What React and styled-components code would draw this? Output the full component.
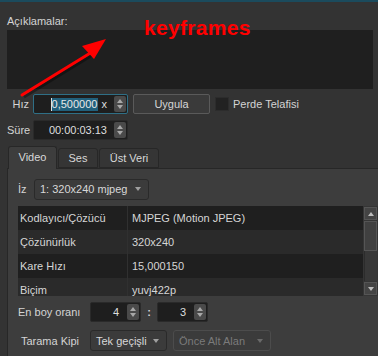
import React from "react";
import styled, { createGlobalStyle } from "styled-components";

const Global = createGlobalStyle`
  html, body { margin: 0; padding: 0; background: #333333; }
  body { font-family: "Liberation Sans", Arial, sans-serif; font-size: 11px; color: #d4d4d4; }
  * { box-sizing: border-box; }
`;

const Page = styled.div`
  position: relative;
  width: 378px;
  height: 356px;
  overflow: hidden;
  background: #333333;
`;

const TopStrip = styled.div`
  height: 2px;
  background: #1b4b5d;
`;

const Body = styled.div`
  padding-left: 7px;
`;

const Caption = styled.div`
  margin-top: 12px;
  height: 16px;
  line-height: 14px;
`;

const NotesBox = styled.div`
  height: 59px;
  margin-right: 5px;
  background: #1f1f1f;
`;

const Row = styled.div`
  display: flex;
  align-items: center;
  height: 20px;
  margin-top: ${(p) => p.$mt}px;
`;

const RowLabel = styled.div`
  width: ${(p) => p.$w}px;
  text-align: right;
  margin-right: ${(p) => p.$gap}px;
  white-space: nowrap;
`;

const Spin = styled.div`
  display: flex;
  width: ${(p) => p.$w}px;
  height: ${(p) => p.$h || 20}px;
  border: 1px solid ${(p) => (p.$focus ? "#2f6f86" : "#2a2a2a")};
  border-radius: 2px;
  background: #1e1e1e;
  overflow: hidden;
`;

const SpinText = styled.div`
  flex: 1;
  display: flex;
  align-items: center;
  justify-content: flex-end;
  padding-right: ${(p) => p.$pr || 7}px;
  white-space: nowrap;
  color: #dedede;
`;

const Sel = styled.span`
  background: #21607c;
  color: #e8e8e8;
  border-left: 1px solid #e0e0e0;
  line-height: 13px;
  padding-right: 1px;
`;

const SpinButtons = styled.div`
  width: 12px;
  margin: 1px 1px 1px 0;
  background: #4a4a4a;
  border-radius: 2px;
  display: flex;
  flex-direction: column;
  align-items: center;
  justify-content: center;
  gap: 2px;
`;

const Tri = styled.div`
  width: 0;
  height: 0;
  border-left: 3.5px solid transparent;
  border-right: 3.5px solid transparent;
  ${(p) =>
    p.$down
      ? `border-top: 4px solid ${p.$c || "#a8a8a8"};`
      : `border-bottom: 4px solid ${p.$c || "#a8a8a8"};`}
`;

const Button = styled.div`
  width: 77px;
  height: 20px;
  margin-left: 5px;
  border: 1px solid #5a5a5a;
  border-radius: 2px;
  background: #3a3a3a;
  display: flex;
  align-items: center;
  justify-content: center;
  color: #d6d6d6;
`;

const Check = styled.div`
  width: 14px;
  height: 14px;
  margin-left: 5px;
  background: #222222;
  border: 1px solid #2c2c2c;
`;

const CheckLabel = styled.div`
  margin-left: 4px;
`;

const TabBar = styled.div`
  display: flex;
  align-items: flex-end;
  height: 22px;
  margin-top: 6px;
  padding-left: 1px;
  gap: 1px;
`;

const Tab = styled.div`
  width: ${(p) => p.$w}px;
  height: ${(p) => (p.$active ? 23 : 20)}px;
  margin-bottom: ${(p) => (p.$active ? -1 : 0)}px;
  background: ${(p) => (p.$active ? "#3d3d3d" : "#353535")};
  border: 1px solid #272727;
  border-bottom: ${(p) => (p.$active ? "none" : "1px solid #272727")};
  border-radius: 3px 3px 0 0;
  display: flex;
  align-items: center;
  justify-content: center;
  padding-bottom: ${(p) => (p.$active ? 2 : 0)}px;
  color: #d8d8d8;
  position: relative;
  z-index: ${(p) => (p.$active ? 2 : 1)};
`;

const Pane = styled.div`
  background: #3d3d3d;
  border-top: 1px solid #272727;
  border-left: 1px solid #272727;
  padding: 10px 0 0 10px;
  height: 200px;
`;

const Combo = styled.div`
  display: flex;
  align-items: center;
  width: ${(p) => p.$w}px;
  height: 21px;
  margin-left: ${(p) => p.$ml || 0}px;
  padding: 0 7px 0 5px;
  border: 1px solid ${(p) => (p.$disabled ? "#4c4c4c" : "#2a2a2a")};
  border-radius: 3px;
  background: #3b3b3b;
  color: ${(p) => (p.$disabled ? "#7a7a7a" : "#d8d8d8")};
  white-space: nowrap;
`;

const ComboText = styled.div`
  flex: 1;
`;

const TableWrap = styled.div`
  display: flex;
  height: 90px;
  margin-top: 7px;
`;

const Table = styled.div`
  flex: 1;
  display: flex;
  flex-direction: column;
  overflow: hidden;
`;

const TRow = styled.div`
  display: grid;
  grid-template-columns: 109px 1fr;
  flex: none;
  height: 24px;
  background: ${(p) => (p.$alt ? "#2a2a2a" : "#1f1f1f")};
`;

const Cell = styled.div`
  display: flex;
  align-items: center;
  padding-left: ${(p) => (p.$second ? 4 : 2)}px;
  border-left: ${(p) => (p.$second ? "1px solid #303030" : "none")};
  color: #d6d6d6;
  white-space: nowrap;
`;

const ScrollBar = styled.div`
  width: 15px;
  display: flex;
  flex-direction: column;
  background: #353535;
  padding: 0 1px 0 1px;
`;

const ScrollBtn = styled.div`
  height: 13px;
  margin: 1px 0;
  background: #444444;
  border: 1px solid #555555;
  display: flex;
  align-items: center;
  justify-content: center;
`;

const ScrollHandle = styled.div`
  height: 30px;
  background: #404040;
  border: 1px solid #555555;
`;

const ScrollTrack = styled.div`
  flex: 1;
  background: #383838;
  border-left: 1px solid #2c2c2c;
`;

const FormGrid = styled.div`
  display: grid;
  grid-template-columns: 61px auto;
  column-gap: 11px;
  row-gap: 8px;
  margin-top: 6px;
  align-items: center;
`;

const FormLabel = styled.div`
  text-align: right;
  white-space: nowrap;
  padding-right: ${(p) => p.$pr || 0}px;
`;

const Inline = styled.div`
  display: flex;
  align-items: center;
`;

const Colon = styled.div`
  width: 16px;
  text-align: center;
  font-weight: bold;
`;

const Overlay = styled.svg`
  position: absolute;
  left: 0;
  top: 0;
  pointer-events: none;
`;

const Annotation = styled.div`
  position: absolute;
  left: 144px;
  top: 16px;
  color: #ff0000;
  font-family: "Liberation Sans", Arial, sans-serif;
  font-weight: bold;
  font-size: 21px;
  letter-spacing: 0.3px;
`;

function SpinArrows() {
  return (
    <SpinButtons>
      <Tri />
      <Tri $down />
    </SpinButtons>
  );
}

const rows = [
  ["Kodlayıcı/Çözücü", "MJPEG (Motion JPEG)"],
  ["Çözünürlük", "320x240"],
  ["Kare Hızı", "15,000150"],
  ["Biçim", "yuvj422p"],
];

export default function App() {
  return (
    <Page>
      <Global />
      <TopStrip />
      <Body>
        <Caption>Açıklamalar:</Caption>
        <NotesBox />
        <Row $mt={5}>
          <RowLabel $w={22} $gap={4}>Hız</RowLabel>
          <Spin $w={95} $focus>
            <SpinText $pr={7}>
              <Sel>0,500000</Sel>&nbsp;x
            </SpinText>
            <SpinArrows />
          </Spin>
          <Button>Uygula</Button>
          <Check />
          <CheckLabel>Perde Telafisi</CheckLabel>
        </Row>
        <Row $mt={6}>
          <RowLabel $w={22} $gap={4}>Süre</RowLabel>
          <Spin $w={95}>
            <SpinText $pr={7}>00:00:03:13</SpinText>
            <SpinArrows />
          </Spin>
        </Row>
        <TabBar>
          <Tab $w={49} $active>Video</Tab>
          <Tab $w={40}>Ses</Tab>
          <Tab $w={60}>Üst Veri</Tab>
        </TabBar>
        <Pane>
          <Row $mt={0}>
            <RowLabel $w={12} $gap={4} style={{ textAlign: "left" }}>İz</RowLabel>
            <Combo $w={115}>
              <ComboText>1: 320x240 mjpeg</ComboText>
              <Tri $down $c="#a0a0a0" />
            </Combo>
          </Row>
          <TableWrap>
            <Table>
              {rows.map((r, i) => (
                <TRow key={r[0]} $alt={i % 2 === 1}>
                  <Cell>{r[0]}</Cell>
                  <Cell $second>{r[1]}</Cell>
                </TRow>
              ))}
            </Table>
            <ScrollBar>
              <ScrollBtn>
                <Tri $c="#bdbdbd" />
              </ScrollBtn>
              <ScrollHandle />
              <ScrollTrack />
              <ScrollBtn>
                <Tri $down $c="#bdbdbd" />
              </ScrollBtn>
            </ScrollBar>
          </TableWrap>
          <FormGrid>
            <FormLabel>En boy oranı</FormLabel>
            <Inline>
              <Spin $w={51}>
                <SpinText $pr={8}>4</SpinText>
                <SpinArrows />
              </Spin>
              <Colon>:</Colon>
              <Spin $w={51}>
                <SpinText $pr={8}>3</SpinText>
                <SpinArrows />
              </Spin>
            </Inline>
            <FormLabel>Tarama Kipi</FormLabel>
            <Inline>
              <Combo $w={77}>
                <ComboText>Tek geçişli</ComboText>
                <Tri $down $c="#a0a0a0" />
              </Combo>
              <Combo $w={98} $ml={6} $disabled>
                <ComboText>Önce Alt Alan</ComboText>
                <Tri $down $c="#6a6a6a" />
              </Combo>
            </Inline>
          </FormGrid>
        </Pane>
      </Body>
      <Annotation>keyframes</Annotation>
      <Overlay width="378" height="356" viewBox="0 0 378 356">
        <line x1="24" y1="97" x2="94" y2="54" stroke="rgba(0,0,0,0.35)" strokeWidth="3" />
        <line x1="22" y1="95" x2="92" y2="52" stroke="#ff0000" strokeWidth="3" strokeLinecap="round" />
        <polygon points="106,39 82,46 94,59" fill="#ff0000" />
      </Overlay>
    </Page>
  );
}
